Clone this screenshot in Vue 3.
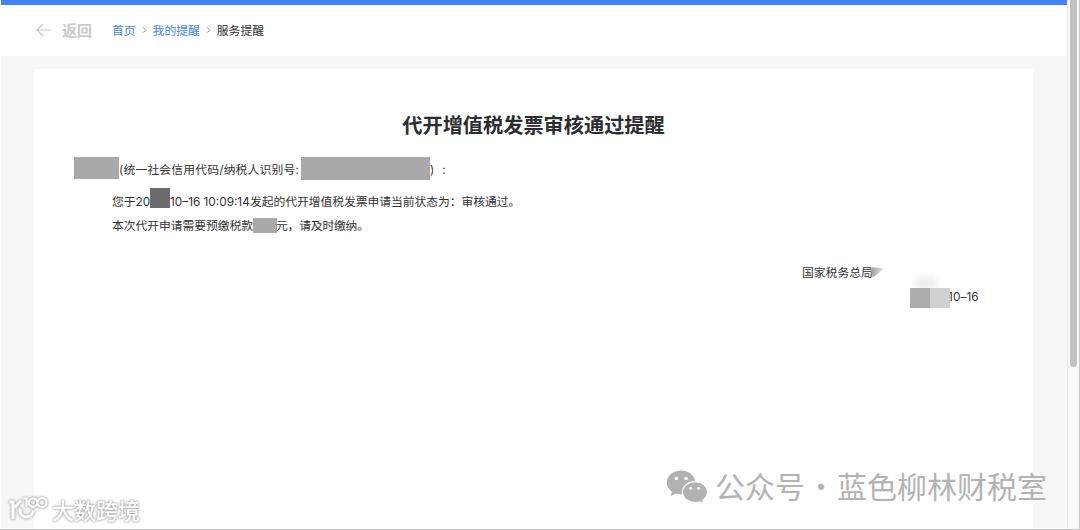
<script setup>
import { ref } from 'vue'

const migas = ref([
    { texto: '首页', enlace: true },
    { texto: '我的提醒', enlace: true },
    { texto: '服务提醒', enlace: false }
]);
</script>

<template>
    <div class="window">
        <div class="main">
            <div class="top-line"></div>
            <header class="nav">
                <a class="back">
                    <svg width="16" height="14" viewBox="0 0 16 14" fill="none" stroke="#c6c6c6" stroke-width="1.2">
                        <path d="M15.5 7H1M7 1L1 7l6 6" />
                    </svg>
                    <span>返回</span>
                </a>
                <nav class="crumbs">
                    <template v-for="(miga, i) in migas" :key="miga.texto">
                        <svg v-if="i > 0" class="sep" width="5" height="8" viewBox="0 0 5 8" fill="none"
                            stroke="#a2a2a2">
                            <path d="M1 1.200L3.800 4 1 6.800" />
                        </svg>
                        <span :class="{ link: miga.enlace }">{{ miga.texto }}</span>
                    </template>
                </nav>
            </header>

            <section class="card">
                <h1>代开增值税发票审核通过提醒</h1>
                <div class="line receiver">
                    <i class="mask name"></i>
                    <span class="label">(统一社会信用代码/纳税人识别号:</span>
                    <i class="mask code"></i>
                    <span>)</span><span class="colon">:</span>
                </div>
                <div class="line first">
                    <span class="year">您于20</span>
                    <i class="mask dark"></i>
                    <span class="date">10–16 10:09:14</span>
                    <span class="status">发起的代开增值税发票申请当前状态为：审核通过。</span>
                </div>
                <div class="line second">
                    <span class="tax">本次代开申请需要预缴税款</span>
                    <i class="mask amount"></i>
                    <span class="due">元，请及时缴纳。</span>
                </div>
                <div class="line office">
                    <span>国家税务总局</span>
                    <i class="smudge"></i>
                </div>
                <div class="line issued">
                    <i class="mask block"></i>
                    <i class="mask block light"></i>
                    <span>10–16</span>
                </div>
            </section>
        </div>

        <aside class="scroll">
            <div class="thumb"></div>
        </aside>

        <!-- Marcas de agua -->
        <div class="account">
            <svg width="42" height="34" viewBox="0 0 42 34">
                <path fill="#b1b1b1"
                    d="M15 .5C7 .5.8 5.800.8 12.500c0 3.800 2 7 5.200 9.200L4.700 26l5-2.500c1.700.5 3.500.7 5.300.7 8 0 14.200-5.300 14.200-11.800S23 .5 15 .5z" />
                <path fill="#b1b1b1" stroke="#fff" stroke-width="1.200"
                    d="M29 11.600c-7 0-12.600 4.700-12.600 10.500S22 32.500 29 32.500c1.600 0 3.100-.2 4.500-.7l4.200 2-1.100-3.600c3-1.900 5-4.800 5-8.100 0-5.800-5.600-10.500-12.600-10.500z" />
                <g fill="#fff">
                    <circle cx="10.300" cy="8.500" r="1.800" />
                    <circle cx="20" cy="8.500" r="1.800" />
                    <circle cx="24.700" cy="18.300" r="1.500" />
                    <circle cx="32.700" cy="18.300" r="1.500" />
                </g>
            </svg>
            <span class="kind">公众号</span>
            <span class="dot">·</span>
            <span>蓝色柳林财税室</span>
        </div>
        <div class="brand">
            <svg width="40" height="28" viewBox="0 0 40 28" fill="none" stroke="#fff" stroke-width="3">
                <path d="M.5 7H4v17M12 5.500L5.500 12.500M11.500 13.500c-3 9 10 12.500 13 2" />
                <path d="M14.500 3.500h3V12" stroke-width="2.200" />
                <circle cx="24" cy="7.500" r="4.200" stroke-width="2.200" />
                <circle cx="33" cy="7.500" r="4.500" stroke-width="2.200" />
            </svg>
            <span>大数跨境</span>
        </div>
    </div>
</template>

<style>
body {
    margin: 0;
    overflow: hidden;
}
</style>

<style scoped>
.window {
    position: relative;
    display: flex;
    box-sizing: border-box;
    width: 1080px;
    height: 530px;
    padding-left: 1px;
    border-right: 1px solid #c9c9c9;
    border-bottom: 1px solid #c1c1c1;
    background: #fff;
    overflow: hidden;
    font-family: Inter, "Noto Sans CJK SC", sans-serif;
    font-size: 11.8px;
    color: #333;
}

.main {
    display: flex;
    flex-direction: column;
    width: 1066px;
    background: #f6f7f9;
}

.top-line {
    height: 5px;
    background: #4285f0;
}

.nav {
    display: flex;
    align-items: center;
    box-sizing: border-box;
    height: 51px;
    padding: 0 0 2px 35px;
    background: #fff;
}

.back {
    display: flex;
    align-items: center;
    gap: 10px;
    width: 76px;
    font-size: 15px;
    font-weight: 700;
    color: #cacaca;
}

.back svg {
    margin-top: 1px;
}

.crumbs {
    display: flex;
    align-items: center;
}

.link {
    color: #4285ea;
}

.sep {
    margin: 0 6px;
}

.card {
    flex: 1;
    width: 999px;
    margin: 13px 0 0 33px;
    background: #fff;
}

h1 {
    margin: 42px 0 0;
    height: 30px;
    line-height: 30px;
    text-align: center;
    font-size: 20.2px;
    font-weight: 700;
    color: #2b2d31;
}

.line {
    display: flex;
    align-items: center;
    height: 24px;
    line-height: 24px;
    white-space: nowrap;
}

.line span {
    padding-top: 2px;
}

.mask {
    flex: none;
    background: #a9a9a9;
}

.receiver {
    margin: 16px 0 0 40px;
}

.name {
    width: 45px;
    height: 22px;
    margin-bottom: 2px;
}

.label {
    width: 182px;
    letter-spacing: 0.17px;
}

.code {
    width: 129px;
    height: 23px;
    margin-bottom: 1px;
}

.colon {
    margin-left: 8px;
}

.first {
    margin: 8px 0 0 78px;
}

.year {
    width: 38px;
}

.dark {
    width: 20px;
    height: 20px;
    margin-bottom: 7px;
    background: #6c6c6c;
}

.date {
    width: 80px;
}

.status {
    letter-spacing: -0.05px;
}

.second {
    margin-left: 78px;
}

.tax {
    width: 141px;
    letter-spacing: -0.05px;
}

.amount {
    width: 24px;
    height: 15px;
}

.due {
    margin-left: -1px;
    letter-spacing: -0.2px;
}

.office {
    margin: 23px 0 0 768px;
}

.smudge {
    width: 15px;
    height: 11px;
    margin-left: -3px;
    background: linear-gradient(90deg, #999, #eee);
    clip-path: polygon(0 0, 100% 15%, 20% 100%);
    filter: blur(1px);
}

.issued {
    position: relative;
    margin-left: 876px;
}

.issued::before {
    content: "";
    position: absolute;
    top: -7px;
    left: 5px;
    width: 22px;
    height: 12px;
    background: #eee;
    filter: blur(3px);
}

.block {
    position: relative;
    width: 20px;
    height: 20px;
    margin-top: 3px;
    background: #adadad;
}

.light {
    background: #d0d0d0;
}

.issued span {
    margin-left: -2px;
    letter-spacing: 0.1px;
}

.scroll {
    box-sizing: border-box;
    width: 12px;
    padding-left: 2px;
    border-left: 1px solid #e8e8e8;
    background: #fafafa;
}

.thumb {
    width: 7px;
    height: 367px;
    border-radius: 0 0 4px 4px;
    background: #c1c1c1;
}

.account {
    position: absolute;
    left: 666px;
    top: 470px;
    display: flex;
    align-items: center;
    height: 34px;
    font-family: "Noto Sans CJK SC", sans-serif;
    font-size: 30px;
    font-weight: 400;
    line-height: 34px;
    color: #b3b3b3;
    white-space: nowrap;
}

.account span {
    padding-bottom: 4px;
}

.kind {
    margin-left: 7px;
}

.dot {
    width: 32px;
    text-align: center;
}

.brand {
    position: absolute;
    left: 9px;
    top: 494px;
    display: flex;
    align-items: center;
    gap: 3px;
    font-family: "Noto Sans CJK SC", sans-serif;
    font-size: 22px;
    font-weight: 500;
    line-height: 30px;
    color: #fff;
    filter: drop-shadow(0 0 1px #aaa) drop-shadow(0 0 1px #bbb);
}
</style>
